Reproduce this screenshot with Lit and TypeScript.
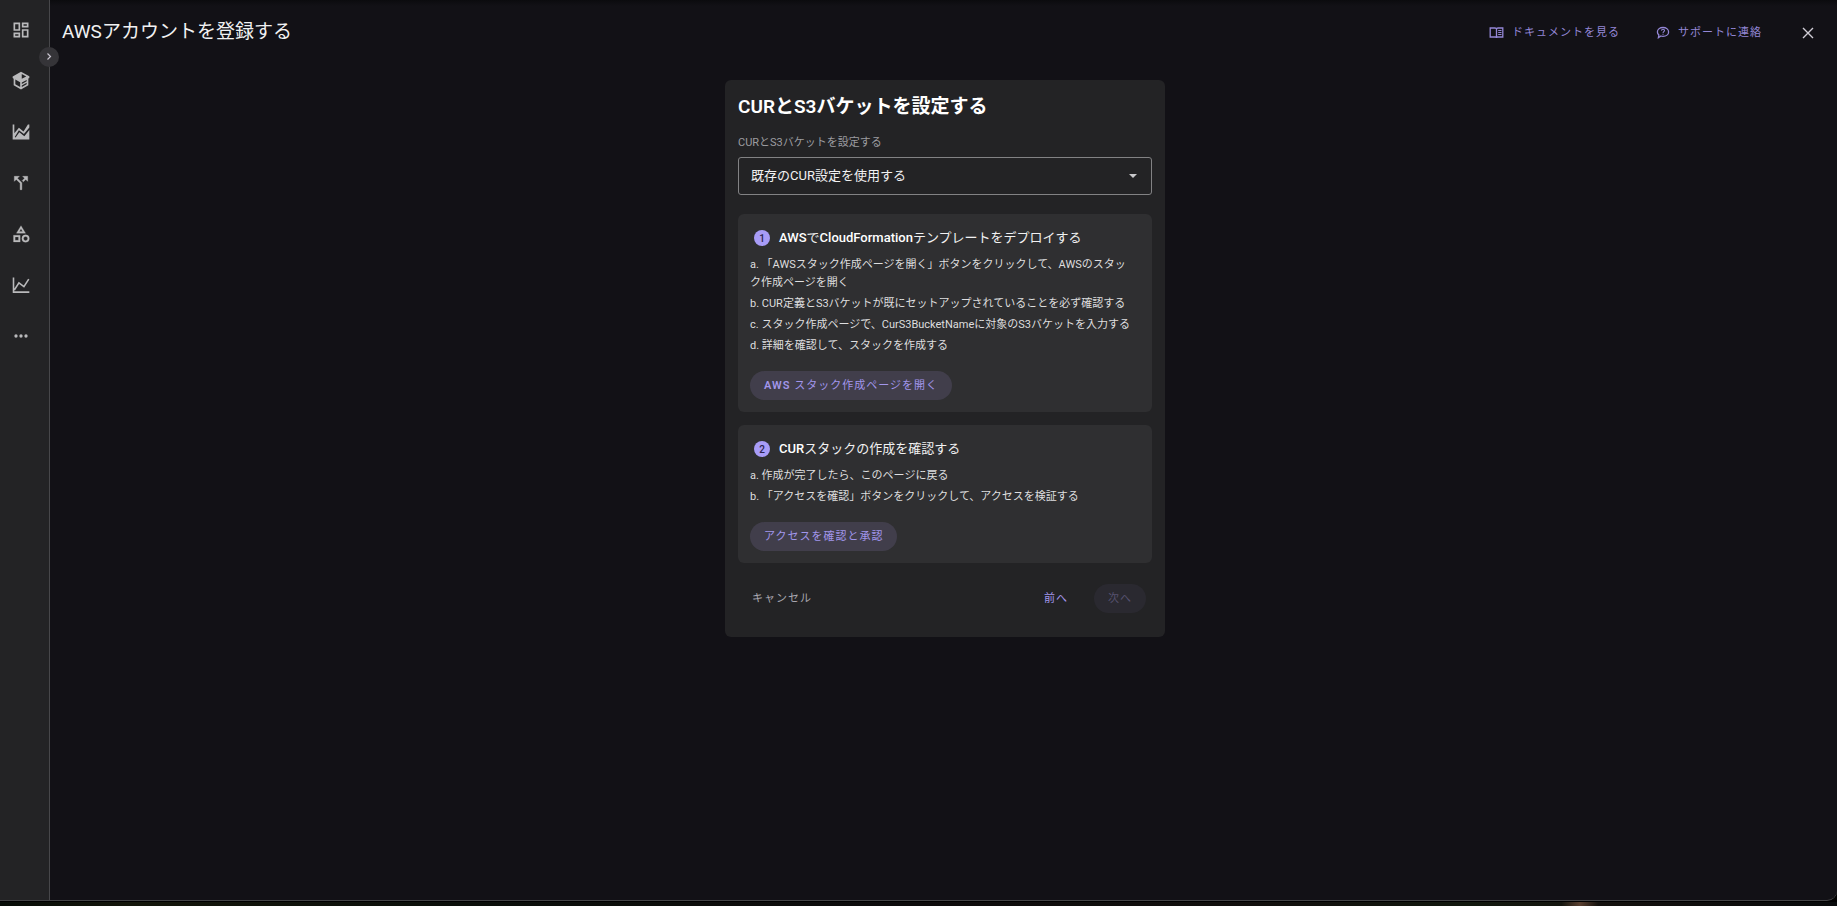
import { LitElement, html, css, svg } from "lit";
import { customElement, state } from "lit/decorators.js";

const navItems = [
  {
    label: "ダッシュボード",
    icon: svg`<path d="M19 5v2h-4V5h4M9 5v6H5V5h4m10 8v6h-4v-6h4M9 17v2H5v-2h4M21 3h-8v6h8V3zM11 3H3v10h8V3zm10 8h-8v10h8V11zm-10 4H3v6h8v-6z"/>`,
  },
  {
    label: "リソース",
    icon: svg`<path d="M12 .8 22 6.300V8.300L20.800 9v8.200L12 22.200 3.200 17.200V9.200L2 8.400V6.600zM12.900 3.600V9.300L18.300 6.600zM5.200 10.300V16l5.800 3.300v-5.800zM13 19.300l5.800-3.300v-1.800L13 17.400zM13 15.600l5.800-3.200v-1.600L13 13.900z" fill-rule="evenodd"/>`,
  },
  {
    label: "コスト",
    icon: svg`<path d="M2 3h2v10.500L9.500 7l5.500 4.500L20.300 3H22v3.500l-6.500 8-6-4.500L4.500 18l1 .6 4.500-6.200 6 4.600L22 9.600V21H2z"/>`,
  },
  {
    label: "配賦",
    icon: svg`<path d="m14 4 2.290 2.290-2.880 2.880 1.420 1.420 2.880-2.880L20 10V4h-6zm-4 0H4v6l2.290-2.290 4.710 4.700V20h2v-8.410l-5.290-5.300L10 4z" stroke="currentColor" stroke-width=".5"/>`,
  },
  {
    label: "カテゴリ",
    icon: svg`<path d="m12 2-5.500 9h11L12 2zm0 3.840L13.930 9h-3.870L12 5.840zM17.500 13a4.500 4.500 0 1 0 0 9 4.500 4.500 0 0 0 0-9zm0 7a2.500 2.500 0 1 1 0-5 2.500 2.500 0 0 1 0 5zM3 21.500h8v-8H3v8zm2-6h4v4H5v-4z" stroke="currentColor" stroke-width=".3"/>`,
  },
  {
    label: "レポート",
    icon: svg`<path d="M3 3v17.500h19M4 18l5.500-8.500 6 4.500L21.300 5" fill="none" stroke="currentColor" stroke-width="1.900"/>`,
  },
  {
    label: "その他",
    icon: svg`<path d="M6 10a2 2 0 1 0 0 4 2 2 0 0 0 0-4zm12 0a2 2 0 1 0 0 4 2 2 0 0 0 0-4zm-6 0a2 2 0 1 0 0 4 2 2 0 0 0 0-4z"/>`,
  },
];

const steps = [
  {
    title: "AWSでCloudFormationテンプレートをデプロイする",
    items: [
      "a. 「AWSスタック作成ページを開く」ボタンをクリックして、AWSのスタック作成ページを開く",
      "b. CUR定義とS3バケットが既にセットアップされていることを必ず確認する",
      "c. スタック作成ページで、CurS3BucketNameに対象のS3バケットを入力する",
      "d. 詳細を確認して、スタックを作成する",
    ],
    action: "AWS スタック作成ページを開く",
  },
  {
    title: "CURスタックの作成を確認する",
    items: [
      "a. 作成が完了したら、このページに戻る",
      "b. 「アクセスを確認」ボタンをクリックして、アクセスを検証する",
    ],
    action: "アクセスを確認と承認",
  },
];

/** Wraps Latin runs so that they can carry a weight of their own beside the Japanese text. */
const mixed = (text: string) =>
  text
    .split(/([A-Za-z0-9.]+)/)
    .map((part, i) => (i % 2 ? html`<span class="latin">${part}</span>` : part));

@customElement("side-nav")
class SideNav extends LitElement {
  static styles = css`
    :host {
      display: block;
      position: relative;
      box-sizing: border-box;
      width: 50px;
      background: #232325;
      border-right: 1px solid #47474a;
    }
    .list {
      display: flex;
      flex-direction: column;
      gap: 31px;
      padding: 20px 0 0 11px;
    }
    .item {
      width: 20px;
      height: 20px;
      color: #b9b9bb;
    }
    .item svg {
      display: block;
      width: 20px;
      height: 20px;
      fill: currentColor;
    }
    .toggle {
      position: absolute;
      top: 47px;
      right: -10px;
      display: grid;
      place-items: center;
      width: 20px;
      height: 20px;
      padding: 0;
      border: 0;
      border-radius: 50%;
      background: #353438;
      color: #c9c5d0;
    }
  `;

  render() {
    return html`
      <nav class="list">
        ${navItems.map(
          (n) => html`<a class="item" href="#" aria-label=${n.label}>
            <svg viewBox="0 0 24 24" aria-hidden="true">${n.icon}</svg>
          </a>`,
        )}
      </nav>
      <button class="toggle" aria-label="メニューを開く">
        <svg width="12" height="12" viewBox="0 0 12 12" aria-hidden="true">
          <path d="M4.500 2.500 7.500 5.500l-3 3" fill="none" stroke="currentColor" stroke-width="1.200" />
        </svg>
      </button>
    `;
  }
}

@customElement("app-root")
class AppRoot extends LitElement {
  @state() private mode = "existing";

  static styles = css`
    :host {
      display: flex;
      flex-direction: column;
      min-height: 100vh;
      background: #000;
      color: #f1f1f2;
      font-family: Roboto, "Noto Sans CJK JP", sans-serif;
      font-size: 11px;
      line-height: 18px;
    }
    .window {
      display: flex;
      flex: 1;
      background: linear-gradient(#0b0b0e, #121116 6px);
      border-bottom: 1px solid #454547;
      border-bottom-right-radius: 10px;
    }
    .desktop {
      height: 4px;
      margin-top: 1px;
      background: linear-gradient(90deg, #070c07, #14160b 7%, #0b0f0a 25%, #0d0b0c 50%, #12100d 70%, #12180e 80%, #14150f 85%, #5a4030 86%, #14110e 87%, #080a0b);
    }
    .main {
      flex: 1;
      min-width: 0;
      padding: 0 9px 0 12px;
    }
    .topbar {
      display: flex;
      justify-content: space-between;
      align-items: center;
      height: 64px;
    }
    .title {
      margin: 0;
      font-size: 19px;
      line-height: 28px;
      font-weight: 400;
    }
    .links {
      display: flex;
      align-items: center;
      padding-top: 2px;
    }
    .link {
      display: flex;
      align-items: center;
      gap: 8px;
      margin-right: 36px;
      color: #9487d6;
      text-decoration: none;
      letter-spacing: 1px;
    }
    .icon-button {
      display: grid;
      padding: 4px;
      margin-right: 10px;
      border: 0;
      background: none;
      color: #d0cdd6;
    }
    .card {
      box-sizing: border-box;
      width: 440px;
      max-width: 100%;
      margin: 16px auto 0;
      padding: 12px 13px 24px;
      border-radius: 6px;
      background: #232325;
    }
    .heading {
      margin: 0 0 9px;
      font-size: 19px;
      line-height: 30px;
      font-weight: 600;
      color: #fff;
    }
    .label {
      display: block;
      margin-bottom: 2px;
      line-height: 24px;
      color: #9c9ca0;
    }
    .field {
      display: grid;
      align-items: center;
      margin-bottom: 19px;
    }
    .select,
    .caret {
      grid-area: 1 / 1;
    }
    .select {
      appearance: none;
      width: 100%;
      height: 38px;
      padding: 0 32px 0 12px;
      border: 1px solid #828284;
      border-radius: 3px;
      background: transparent;
      color: #f1f1f2;
      font: inherit;
      font-size: 13px;
    }
    .caret {
      justify-self: end;
      margin-right: 15px;
      pointer-events: none;
    }
    .panel {
      padding: 13px 13px 12px 12px;
      border-radius: 6px;
      background: #2f2f31;
    }
    .panel + .panel {
      margin-top: 13px;
    }
    .step-head {
      display: flex;
      align-items: center;
      gap: 9px;
      margin-bottom: 7px;
      padding-left: 4px;
    }
    .badge {
      display: grid;
      place-items: center;
      width: 16px;
      height: 16px;
      border-radius: 50%;
      background: #a89cf7;
      color: #2b2350;
      font-size: 10px;
      font-weight: 500;
    }
    .step-title {
      margin: 0;
      font-size: 13px;
      line-height: 22px;
      font-weight: 400;
    }
    .step-title .latin {
      font-weight: 500;
      color: #fff;
    }
    .items {
      display: flex;
      flex-direction: column;
      gap: 3px;
      margin: 0 0 16px;
      padding: 0 5px 0 0;
      list-style: none;
      color: #dededf;
    }
    .btn {
      height: 29px;
      padding: 0 14px;
      border: 0;
      border-radius: 15px;
      background: none;
      color: #a296ec;
      font: inherit;
      letter-spacing: 1px;
    }
    .btn .latin {
      font-weight: 600;
    }
    .btn.tonal {
      background: #413e4b;
    }
    .btn.muted {
      color: #a9a7b0;
    }
    .btn:disabled {
      background: #2a2930;
      color: #56516f;
    }
    .footer {
      display: flex;
      align-items: center;
      gap: 12px;
      margin-top: 21px;
      padding-right: 6px;
    }
    .footer .muted {
      margin-right: auto;
    }
  `;

  render() {
    return html`
      <div class="window">
        <side-nav></side-nav>
        <main class="main">
          <header class="topbar">
            <h1 class="title">AWSアカウントを登録する</h1>
            <div class="links">
              <a class="link" href="#">
                <svg width="15" height="12" viewBox="0 0 14 12" fill="none" stroke="currentColor" aria-hidden="true">
                  <path d="M.7 1h4.800Q7 1 7 2q0-1 1.500-1h4.800v9H8Q7 10 7 11q0-1-1-1H.7zM7 2v8.500" stroke-width="1.300" />
                  <path d="M8.700 3.500H12M8.700 5.500H12M8.700 7.500H12" stroke-width="1" />
                </svg>
                ドキュメントを見る
              </a>
              <a class="link" href="#">
                <svg width="14" height="14" viewBox="0 0 14 14" fill="none" stroke="currentColor" aria-hidden="true">
                  <path d="M2.400 11.700 2.900 8.900C1.900 8.100 1.400 7 1.400 5.900 1.400 3.300 3.900 1.500 7 1.500s5.600 1.800 5.600 4.400S10.200 10.300 7 10.300c-.7 0-1.400-.1-2-.3z" stroke-width="1.300" />
                  <path d="M5.500 4.600C5.600 3.600 6.200 3.300 7 3.300c.9 0 1.500.5 1.500 1.200 0 1-1.300 1.100-1.500 2.300M7 7.800v1" stroke-width="1.100" />
                </svg>
                サポートに連絡
              </a>
              <button class="icon-button" aria-label="閉じる">
                <svg width="12" height="12" viewBox="0 0 12 12" aria-hidden="true">
                  <path d="m1 1 10 10M11 1 1 11" stroke="currentColor" stroke-width="1.400" />
                </svg>
              </button>
            </div>
          </header>
          <section class="card">
            <h2 class="heading">CURとS3バケットを設定する</h2>
            <label class="label" for="mode">CURとS3バケットを設定する</label>
            <div class="field">
              <select
                class="select"
                id="mode"
                .value=${this.mode}
                @change=${(e: Event) => (this.mode = (e.target as HTMLSelectElement).value)}
              >
                <option value="existing">既存のCUR設定を使用する</option>
              </select>
              <svg class="caret" width="8" height="4" viewBox="0 0 8 4" aria-hidden="true">
                <path d="M0 0h8L4 4z" fill="#c9c9cc" />
              </svg>
            </div>
            ${steps.map(
              (s, i) => html`<section class="panel">
                <div class="step-head">
                  <span class="badge">${i + 1}</span>
                  <h3 class="step-title">${mixed(s.title)}</h3>
                </div>
                <ul class="items">
                  ${s.items.map((t) => html`<li>${t}</li>`)}
                </ul>
                <button class="btn tonal">${mixed(s.action)}</button>
              </section>`,
            )}
            <footer class="footer">
              <button class="btn muted">キャンセル</button>
              <button class="btn">前へ</button>
              <button class="btn" disabled>次へ</button>
            </footer>
          </section>
        </main>
      </div>
      <div class="desktop"></div>
    `;
  }
}
